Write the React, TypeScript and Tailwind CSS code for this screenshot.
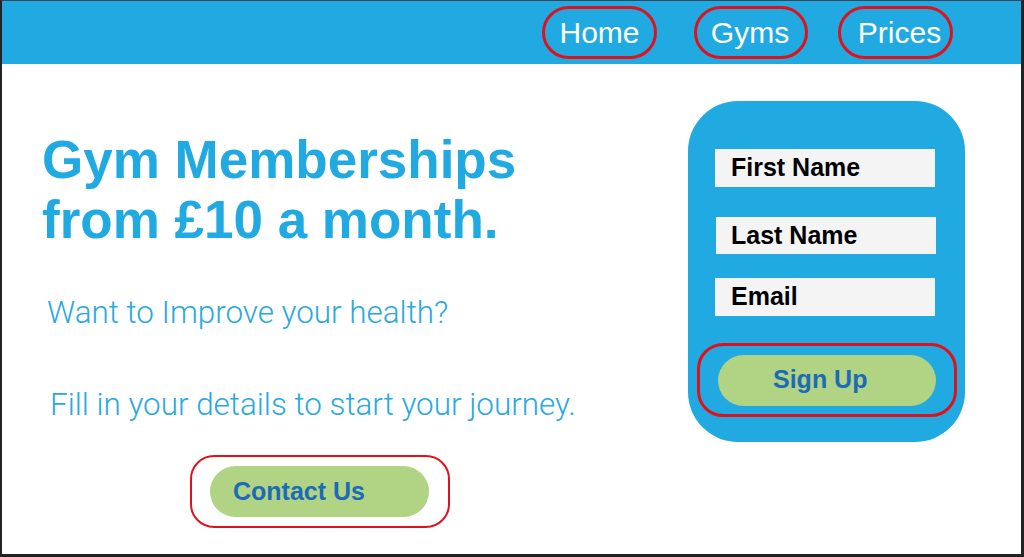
import React from "react";

export default function App() {
  return (
    <div className="w-[1024px] h-[557px] bg-white border-t-[1px] border-l-2 border-r-[3px] border-b-[3px] border-t-[#3a4656] border-l-[#222] border-r-[#222] border-b-[#222] flex flex-col overflow-hidden font-['Liberation_Sans',Arial,Helvetica,sans-serif]">
      <header className="h-[63px] bg-[#21a9e1] flex items-center shrink-0">
        <nav className="ml-[540px] flex items-center h-full">
          <div className="w-[115px] h-[53px] rounded-full border-[3px] border-[#e0111b] flex items-center justify-center text-white text-[30px] leading-none">
            Home
          </div>
          <div className="ml-[37px] w-[114px] h-[53px] rounded-full border-[3px] border-[#e0111b] flex items-center justify-center text-white text-[30px] leading-none pr-[2px]">
            Gyms
          </div>
          <div className="ml-[30px] w-[115px] h-[53px] rounded-full border-[3px] border-[#e0111b] flex items-center justify-center text-white text-[30px] leading-none pl-[8px]">
            Prices
          </div>
        </nav>
      </header>
      <main className="flex flex-1">
        <section className="w-[686px] shrink-0 pl-[40px] pt-[66px] flex flex-col">
          <h1 className="text-[53px] leading-[60px] font-bold text-[#21a9e1]">
            Gym Memberships
            <br />
            from £10 a month.
          </h1>
          <p className="mt-[45px] ml-[5px] text-[31.4px] leading-[36px] text-[#2aa9e0] font-light font-['Roboto',sans-serif]">
            Want to Improve your health?
          </p>
          <p className="mt-[56px] ml-[8px] text-[31.4px] leading-[36px] text-[#2aa9e0] font-light font-['Roboto',sans-serif]">
            Fill in your details to start your journey.
          </p>
          <div className="mt-[32px] ml-[148px] w-[260px] h-[73px] rounded-[24px] border-2 border-[#e0111b] flex items-center pl-[18px]">
            <div className="w-[219px] h-[51px] rounded-full bg-[#b1d384] flex items-center pl-[23px] text-[25px] font-bold text-[#1d6bb7]">
              Contact Us
            </div>
          </div>
        </section>
        <aside className="mt-[37px] w-[277px] h-[341px] rounded-[50px] bg-[#21a9e1] flex flex-col pt-[48px]">
          <div className="ml-[27px] w-[220px] h-[38px] bg-[#f4f4f4] flex items-center pl-[16px] text-[25px] font-bold text-black">
            First Name
          </div>
          <div className="mt-[30px] ml-[28px] w-[220px] h-[37px] bg-[#f4f4f4] flex items-center pl-[15px] text-[25px] font-bold text-black">
            Last Name
          </div>
          <div className="mt-[24px] ml-[27px] w-[220px] h-[38px] bg-[#f4f4f4] flex items-center pl-[16px] text-[25px] font-bold text-black">
            Email
          </div>
          <div className="mt-[27px] ml-[9px] w-[260px] h-[74px] rounded-[26px] border-[3px] border-[#e0111b] flex items-center pl-[18px]">
            <div className="w-[218px] h-[51px] rounded-full bg-[#b1d384] flex items-center pl-[55px] text-[25px] font-bold text-[#1d6bb7]">
              Sign Up
            </div>
          </div>
        </aside>
      </main>
    </div>
  );
}
